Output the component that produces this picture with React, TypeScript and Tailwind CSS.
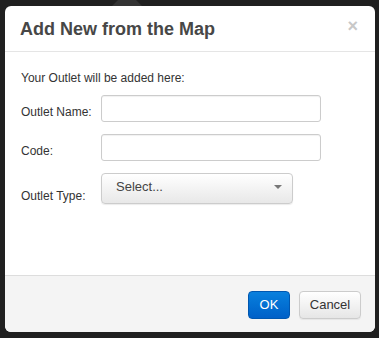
import React from 'react'

const Field = ({ label, children }: { label: string; children: React.ReactNode }) => (
  <div className="flex items-end">
    <label className="w-[80px] pb-[1px] text-[12px] text-[#333]">{label}</label>
    {children}
  </div>
)

const App = () => {
  return (
    <div
      className="relative w-[379px] h-[338px] bg-[#202020] overflow-hidden"
      style={{ fontFamily: '"Liberation Sans", Arial, sans-serif' }}
    >
      {/* map header notch behind the modal */}
      <div className="absolute left-[112px] top-0 w-[30px] h-[6px] bg-[#333] [clip-path:polygon(20%_0,80%_0,100%_100%,0_100%)]" />

      <div className="absolute left-[5px] top-[6px] w-[370px] h-[326px] flex flex-col bg-white rounded-[6px] overflow-hidden">
        {/* Header */}
        <div className="flex items-center justify-between h-[46px] pl-[15px] pr-[17px] pt-[2px] border-b border-[#e5e5e5]">
          <h3 className="text-[18px] font-bold text-[#474747]">Add New from the Map</h3>
          <span className="text-[18px] font-bold leading-none text-[#c8c8c8] -mt-[8px]">×</span>
        </div>

        {/* Body */}
        <div className="flex-1 px-[16px] pt-[17px]">
          <p className="text-[12px] text-[#333] mb-[8px]">Your Outlet will be added here:</p>
          <div className="flex flex-col gap-[12px]">
            <Field label="Outlet Name:">
              <input className="w-[220px] h-[27px] border border-[#ccc] rounded-[3px] bg-white shadow-[inset_0_1px_1px_rgba(0,0,0,0.06)] outline-none" />
            </Field>
            <Field label="Code:">
              <input className="w-[220px] h-[27px] border border-[#ccc] rounded-[3px] bg-white shadow-[inset_0_1px_1px_rgba(0,0,0,0.06)] outline-none" />
            </Field>
            <div className="flex items-end">
              <label className="w-[80px] -mb-[1px] text-[12px] text-[#333]">Outlet Type:</label>
              <div className="w-[192px] h-[31px] flex items-center justify-between pl-[14px] pr-[10px] pb-[3px] border border-[#ccc] rounded-[4px] bg-gradient-to-b from-white to-[#e8e8e8] shadow-[0_1px_1px_rgba(0,0,0,0.08)]">
                <span className="text-[13px] text-[#444]">Select...</span>
                <span className="w-0 h-0 border-l-[4px] border-r-[4px] border-t-[4px] border-l-transparent border-r-transparent border-t-[#777]" />
              </div>
            </div>
          </div>
        </div>

        {/* Footer */}
        <div className="flex items-center justify-end gap-[9px] h-[57px] px-[14px] pt-[1px] bg-[#f4f4f4] border-t border-[#ddd]">
          <button className="w-[42px] h-[28px] rounded-[4px] bg-gradient-to-b from-[#0a80dd] to-[#0060c8] border border-[#0057b0] text-white text-[13px]">
            OK
          </button>
          <button className="w-[62px] h-[28px] rounded-[4px] bg-gradient-to-b from-white to-[#e6e6e6] border border-[#ccc] text-[#333] text-[13px] shadow-[0_1px_1px_rgba(0,0,0,0.06)]">
            Cancel
          </button>
        </div>
      </div>
    </div>
  )
}

export default App
